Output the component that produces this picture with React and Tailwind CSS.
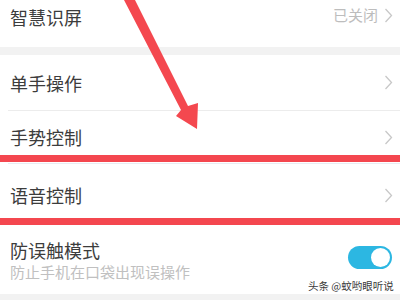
import { useState } from 'react';

function Chevron() {
  return (
    <svg width="9" height="15" viewBox="0 0 9 15" className="shrink-0">
      <polyline points="1.5,1 7.5,7.5 1.5,14" fill="none" stroke="#c8c8c8" strokeWidth="1.3" />
    </svg>
  );
}

function NavRow({ label, value, className }) {
  return (
    <div className={`flex items-center justify-between bg-white pl-[10px] pr-[7px] ${className}`}>
      <span className="text-[18px] leading-[24px] text-[#3c3c3c]">{label}</span>
      <div className="flex items-center gap-[6px]">
        {value ? <span className="text-[15px] leading-[20px] text-[#bdbdbd]">{value}</span> : null}
        <Chevron />
      </div>
    </div>
  );
}

export default function App() {
  const [on, setOn] = useState(true);

  return (
    <div
      className="relative h-[300px] w-[400px] overflow-hidden bg-white"
      style={{ fontFamily: '"Noto Sans CJK SC", "Noto Sans", sans-serif' }}
    >
      <NavRow label="智慧识屏" value="已关闭" className="h-[47px] !items-start pt-[5px]" />
      <div className="h-[8px] bg-[#f2f2f2]" />
      <NavRow label="单手操作" className="h-[55px]" />
      <div className="ml-[8px] h-px bg-[#ececec]" />
      <NavRow label="手势控制" className="h-[52px]" />
      <div className="ml-[8px] h-px bg-[#e8ecf2]" />
      <NavRow label="语音控制" className="h-[62px]" />
      <div className="flex h-[68px] items-center justify-between bg-white pl-[10px] pr-[8px]">
        <div className="flex flex-col">
          <span className="text-[18px] leading-[22px] text-[#3c3c3c]">防误触模式</span>
          <span className="mt-[1px] text-[15px] leading-[20px] text-[#c0c0c0]">防止手机在口袋出现误操作</span>
        </div>
        <button
          type="button"
          onClick={() => setOn(!on)}
          className={`mb-[6px] flex h-[23px] w-[44px] items-center rounded-full px-[2px] ${on ? 'justify-end bg-[#2cb7e2]' : 'justify-start bg-[#dddddd]'}`}
        >
          <span className="h-[19px] w-[19px] rounded-full bg-white" />
        </button>
      </div>
      <div className="h-[10px] bg-[#f2f2f2]" />

      {/* annotations */}
      <div className="absolute left-0 top-[155px] h-[7px] w-[400px] bg-[#f4474f]" />
      <div className="absolute left-0 top-[218px] h-[7px] w-[400px] bg-[#f4474f]" />
      <svg className="absolute left-0 top-0" width="400" height="300" viewBox="0 0 400 300">
        <polygon
          points="124,0 135,0 188,106 198,103 197,129 176,116 181,110"
          fill="#f4484f"
        />
      </svg>
      <span
        className="absolute left-[308px] top-[279px] whitespace-nowrap text-[10.5px] leading-[14px] text-[#3a3a3a]"
        style={{ textShadow: '0 0 2px #fff' }}
      >
        头条 @蚊哟眼听说
      </span>
    </div>
  );
}
